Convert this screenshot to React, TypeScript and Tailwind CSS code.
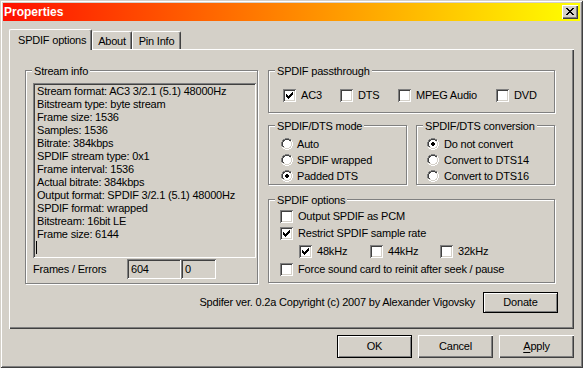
import type { ReactNode } from 'react';

// classic win2k dialog: "Properties" of the Spdifer filter

const CHECK = ['......X', '.....XX', 'X...XXX', 'XX.XXX.', 'XXXXX..', '.XXX...', '..X....'];
const CLOSE_X = ['XX....XX', '.XX..XX.', '..XXXX..', '...XX...', '..XXXX..', '.XX..XX.', 'XX....XX'];
const RADIO = [
  '....gggg....',
  '..ggddddgg..',
  '.gddwwwwddw.',
  '.gdwwwwwwlw.',
  'gdwwwwwwwwlw',
  'gdwwwwwwwwlw',
  'gdwwwwwwwwlw',
  'gdwwwwwwwwlw',
  '.gdwwwwwwlw.',
  '.wllwwwwllw.',
  '..wwllllww..',
  '....wwww....',
];
const DOT = ['.XX.', 'XXXX', 'XXXX', '.XX.'];

const COLORS: Record<string, string> = {
  X: '#000000',
  g: '#808080',
  d: '#404040',
  w: '#ffffff',
  l: '#d4d0c8',
};

function Pixels({ rows, dot }: { rows: string[]; dot?: boolean }) {
  const w = rows[0].length;
  const h = rows.length;
  const rects: ReactNode[] = [];
  rows.forEach((row, y) =>
    row.split('').forEach((c, x) => {
      if (COLORS[c]) rects.push(<rect key={`${x}-${y}`} x={x} y={y} width={1} height={1} fill={COLORS[c]} />);
    })
  );
  if (dot) {
    DOT.forEach((row, y) =>
      row.split('').forEach((c, x) => {
        if (c === 'X') rects.push(<rect key={`d${x}-${y}`} x={x + 4} y={y + 4} width={1} height={1} fill="#000" />);
      })
    );
  }
  return (
    <svg width={w} height={h} viewBox={`0 0 ${w} ${h}`} shapeRendering="crispEdges" className="block shrink-0">
      {rects}
    </svg>
  );
}

function Box({ checked }: { checked?: boolean }) {
  return (
    <span className="flex h-[13px] w-[13px] shrink-0 items-start bg-white pl-[3px] pt-[3px] shadow-[inset_1px_1px_0_#808080,inset_-1px_-1px_0_#ffffff,inset_2px_2px_0_#404040,inset_-2px_-2px_0_#d4d0c8]">
      {checked && <Pixels rows={CHECK} />}
    </span>
  );
}

function CheckItem({ label, checked, className = '' }: { label: string; checked?: boolean; className?: string }) {
  return (
    <div className={`flex items-center ${className}`}>
      <Box checked={checked} />
      <span className="ml-[5px] whitespace-nowrap">{label}</span>
    </div>
  );
}

function Radio({ label, checked, gap }: { label: string; checked?: boolean; gap: string }) {
  return (
    <div className="flex h-[16px] items-center">
      <Pixels rows={RADIO} dot={checked} />
      <span className={`${gap} whitespace-nowrap`}>{label}</span>
    </div>
  );
}

function Group({ title, className, children }: { title: string; className: string; children?: ReactNode }) {
  return (
    <div className={`relative shrink-0 border border-[#808080] shadow-[inset_1px_1px_0_#ffffff,1px_1px_0_#ffffff] ${className}`}>
      <span className="absolute -top-[6px] left-[6px] bg-[#d4d0c8] px-[2px] leading-[13px] whitespace-nowrap">{title}</span>
      {children}
    </div>
  );
}

const streamLines = [
  'Stream format: AC3 3/2.1 (5.1) 48000Hz',
  'Bitstream type: byte stream',
  'Frame size: 1536',
  'Samples: 1536',
  'Bitrate: 384kbps',
  'SPDIF stream type: 0x1',
  'Frame interval: 1536',
  'Actual bitrate: 384kbps',
  'Output format: SPDIF 3/2.1 (5.1) 48000Hz',
  'SPDIF format: wrapped',
  'Bitstream: 16bit LE',
  'Frame size: 6144',
];

const sunken =
  'shadow-[inset_1px_1px_0_#808080,inset_-1px_-1px_0_#ffffff,inset_2px_2px_0_#404040,inset_-2px_-2px_0_#d4d0c8]';

export default function App() {
  return (
    <div className="flex h-[368px] w-[583px] flex-col bg-[#d4d0c8] p-[3px] font-['Liberation_Sans',Arial,sans-serif] text-[11px] leading-[13px] tracking-[-0.2px] text-black shadow-[inset_1px_1px_0_#d4d0c8,inset_-1px_-1px_0_#404040,inset_2px_2px_0_#ffffff,inset_-2px_-2px_0_#808080]">
      {/* Title bar */}
      <div className="flex h-[18px] shrink-0 items-center justify-between bg-linear-to-r/srgb from-[#ff1000] to-[#ffff00] pl-[1px]">
        <span className="text-[12px] font-bold tracking-normal text-white">Properties</span>
        <div className="mr-[2px] flex h-[14px] w-[16px] items-start bg-[#d4d0c8] pl-[4px] pt-[3px] shadow-[inset_1px_1px_0_#ffffff,inset_-1px_-1px_0_#404040,inset_-2px_-2px_0_#808080]">
          <Pixels rows={CLOSE_X} />
        </div>
      </div>

      {/* Tabs */}
      <div className="ml-[6px] mt-[8px] flex h-[20px] shrink-0 items-end">
        <div className="relative -mb-px h-[21px] w-[83px] rounded-t-[2px] border-x border-t border-l-white border-r-[#404040] border-t-white bg-[#d4d0c8] pl-[8px] pt-[4px] shadow-[inset_-1px_0_0_#808080]">
          SPDIF options
        </div>
        <div className="flex h-[18px] w-[40px] justify-center rounded-t-[2px] border-x border-t border-l-white border-r-[#404040] border-t-white pt-[3px] shadow-[inset_-1px_0_0_#808080]">
          About
        </div>
        <div className="flex h-[18px] w-[49px] justify-center rounded-t-[2px] border-x border-t border-l-white border-r-[#404040] border-t-white pt-[3px] shadow-[inset_-1px_0_0_#808080]">
          Pin Info
        </div>
      </div>

      {/* Tab page */}
      <div className="ml-[6px] flex h-[280px] w-[565px] shrink-0 flex-col px-[16px] pt-[21px] shadow-[inset_1px_1px_0_#ffffff,inset_-1px_-1px_0_#404040,inset_-2px_-2px_0_#808080]">
        <div className="flex">
          <Group title="Stream info" className="mr-[10px] h-[214px] w-[233px] pl-[7px] pt-[12px]">
            <div className={`h-[175px] w-[223px] bg-[#d4d0c8] pl-[4px] pt-[2px] ${sunken}`}>
              {streamLines.map((line, i) => (
                <div key={i} className="whitespace-nowrap">
                  {line}
                </div>
              ))}
              <div className="-ml-px h-[13px] w-px bg-black" />
            </div>
            <div className="mt-[1px] flex h-[20px] items-center">
              <span className="w-[94px]">Frames / Errors</span>
              <div className={`h-[20px] w-[54px] pl-[4px] leading-[20px] ${sunken}`}>604</div>
              <div className={`h-[20px] w-[35px] pl-[4px] leading-[20px] ${sunken}`}>0</div>
            </div>
          </Group>

          <div className="flex flex-col">
            <Group title="SPDIF passthrough" className="h-[43px] w-[287px] pl-[14px] pt-[18px]">
              <div className="flex">
                <CheckItem label="AC3" checked className="w-[57px]" />
                <CheckItem label="DTS" className="w-[58px]" />
                <CheckItem label="MPEG Audio" className="w-[98px]" />
                <CheckItem label="DVD" />
              </div>
            </Group>

            <div className="mt-[12px] flex">
              <Group title="SPDIF/DTS mode" className="h-[60px] w-[139px] pl-[12px] pt-[10px]">
                <Radio label="Auto" gap="ml-[4px]" />
                <Radio label="SPDIF wrapped" gap="ml-[4px]" />
                <Radio label="Padded DTS" checked gap="ml-[4px]" />
              </Group>
              <Group title="SPDIF/DTS conversion" className="ml-[9px] h-[60px] w-[139px] pl-[10px] pt-[10px]">
                <Radio label="Do not convert" checked gap="ml-[5px]" />
                <Radio label="Convert to DTS14" gap="ml-[5px]" />
                <Radio label="Convert to DTS16" gap="ml-[5px]" />
              </Group>
            </div>

            <Group title="SPDIF options" className="mt-[14px] h-[84px] w-[287px] pl-[11px] pt-[7px]">
              <CheckItem label="Output SPDIF as PCM" className="h-[18px]" />
              <CheckItem label="Restrict SPDIF sample rate" checked className="h-[17px]" />
              <div className="ml-[19px] flex h-[18px]">
                <CheckItem label="48kHz" checked className="w-[71px]" />
                <CheckItem label="44kHz" className="w-[70px]" />
                <CheckItem label="32kHz" />
              </div>
              <CheckItem label="Force sound card to reinit after seek / pause" className="h-[18px]" />
            </Group>
          </div>
        </div>

        <div className="mt-[8px] flex items-center justify-end gap-[8px]">
          <span className="whitespace-nowrap">Spdifer ver. 0.2a Copyright (c) 2007 by Alexander Vigovsky</span>
          <div className="flex h-[21px] w-[75px] items-center justify-center border border-black shadow-[inset_1px_1px_0_#ffffff,inset_-1px_-1px_0_#808080]">
            Donate
          </div>
        </div>
      </div>

      {/* Dialog buttons */}
      <div className="ml-[6px] mt-[6px] flex w-[565px] justify-end gap-[6px]">
        <div className="flex h-[23px] w-[75px] items-center justify-center border border-black shadow-[inset_1px_1px_0_#ffffff,inset_-1px_-1px_0_#808080]">
          OK
        </div>
        <div className="flex h-[23px] w-[75px] items-center justify-center shadow-[inset_1px_1px_0_#ffffff,inset_-1px_-1px_0_#404040,inset_-2px_-2px_0_#808080]">
          Cancel
        </div>
        <div className="flex h-[23px] w-[75px] items-center justify-center shadow-[inset_1px_1px_0_#ffffff,inset_-1px_-1px_0_#404040,inset_-2px_-2px_0_#808080]">
          <span>
            <span className="underline underline-offset-[2px]">A</span>pply
          </span>
        </div>
      </div>
    </div>
  );
}
